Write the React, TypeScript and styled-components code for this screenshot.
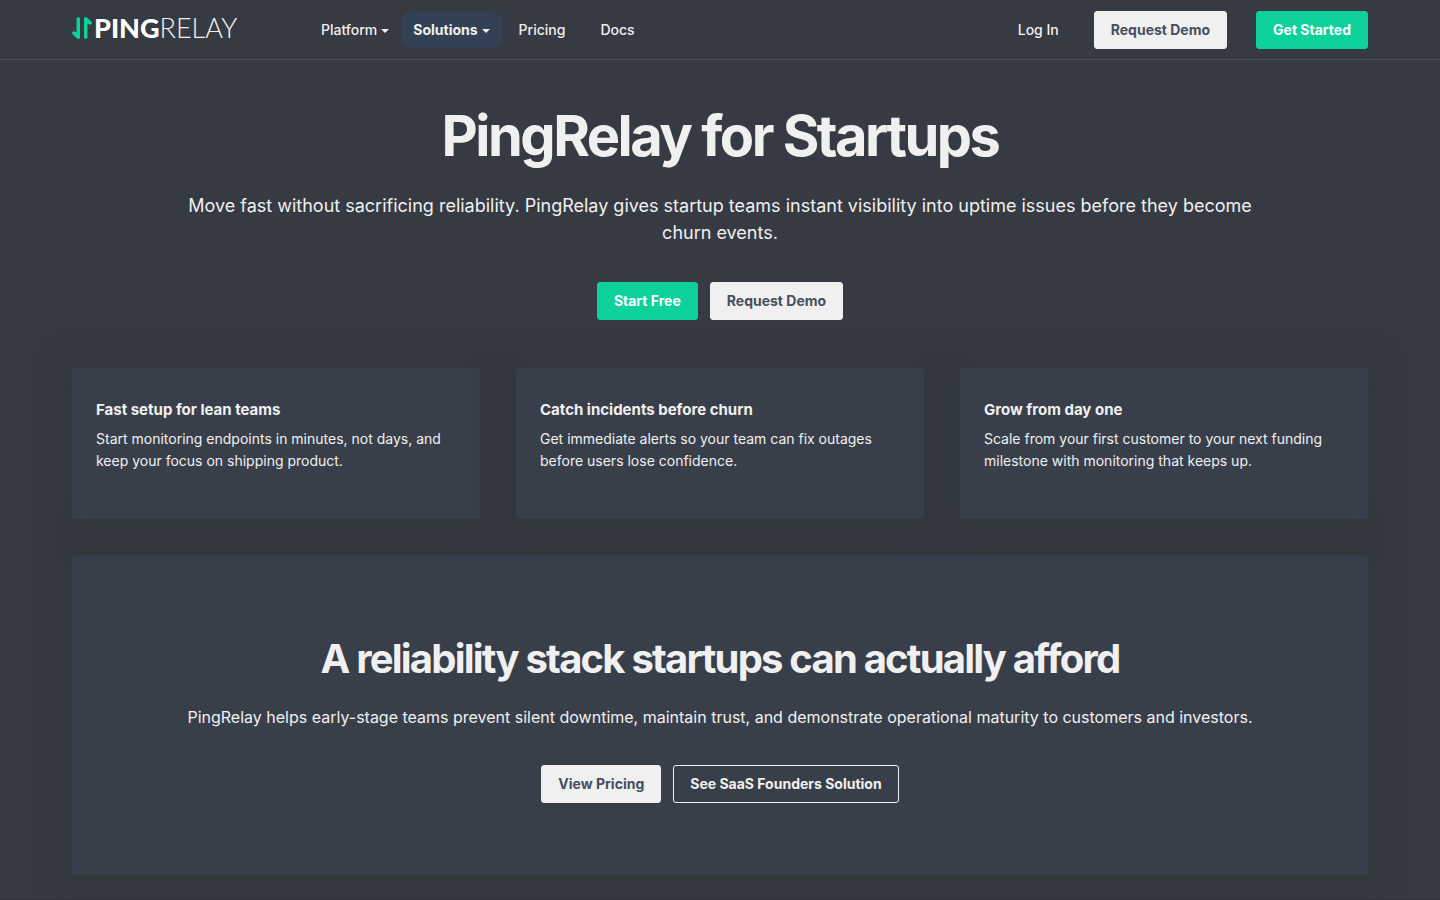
import React from "react";
import styled, { createGlobalStyle, css } from "styled-components";

const GlobalStyle = createGlobalStyle`
  *, *::before, *::after { box-sizing: border-box; }
  body {
    margin: 0;
    background: #363a42;
    color: #f0f0f0;
    font-family: Inter, "Liberation Sans", sans-serif;
    font-size: 14px;
    line-height: 22px;
  }
  h1, h2, h3, p { margin: 0; }
  a { color: inherit; text-decoration: none; }
`;

const Header = styled.header`
  display: flex;
  align-items: center;
  height: 60px;
  padding: 0 5%;
  border-bottom: 1px solid #4a4f5a;
`;

const Brand = styled.a`
  display: flex;
  align-items: center;
  width: 237px;
  padding-bottom: 4px;
`;

const Wordmark = styled.span`
  font-family: Lato, sans-serif;
  font-size: 27px;
  line-height: 28px;
  font-weight: 300;
  color: #f0f0f0;
  strong { font-weight: 900; color: #fff; }
`;

const Nav = styled.nav`
  display: flex;
  align-items: center;
  flex: 1;
`;

const navItem = css`
  display: flex;
  align-items: center;
  gap: 4px;
  height: 36px;
  padding: 0 12px;
  border: 0;
  border-radius: 10px;
  background: transparent;
  color: #f0f0f0;
  font: inherit;
  font-weight: 500;
`;

const NavButton = styled.button<{ $active?: boolean }>`
  ${navItem}
  ${(p) => p.$active && css`background: #334155; font-weight: 700;`}
`;

const NavLink = styled.a`
  ${navItem}
  margin-left: 5px;
  & + & { margin-left: 11px; }
`;

const Caret = styled.span`
  margin-top: 2px;
  border: 4px solid transparent;
  border-top-color: currentColor;
  border-bottom: 0;
`;

const Actions = styled.div`
  display: flex;
  align-items: center;
`;

const LoginLink = styled.a`
  font-weight: 500;
  margin-right: 35px;
`;

const Button = styled.a<{ $kind: "primary" | "light" | "outline" }>`
  display: inline-flex;
  align-items: center;
  height: 38px;
  padding: 0 16px;
  border: 1px solid transparent;
  border-radius: 3px;
  font-weight: 700;
  white-space: nowrap;
  ${(p) => p.$kind === "primary" && css`background: #0dd19b; border-color: #0dd19b; color: #fff;`}
  ${(p) => p.$kind === "light" && css`background: #f0f0f0; border-color: #f0f0f0; color: #474e5d;`}
  ${(p) => p.$kind === "outline" && css`border-color: #f0f0f0;`}
`;

const ActionButtons = styled.div`
  display: flex;
  gap: 29px;
`;

const Main = styled.main`
  padding: 48px 5% 24px;
`;

const Hero = styled.section`
  display: flex;
  flex-direction: column;
  align-items: center;
  text-align: center;
`;

const Title = styled.h1`
  font-size: 56px;
  line-height: 56px;
  font-weight: 700;
  letter-spacing: -0.045em;
`;

const Lead = styled.p`
  max-width: 1080px;
  margin-top: 28px;
  font-size: 18px;
  line-height: 27px;
`;

const ButtonRow = styled.div`
  display: flex;
  justify-content: center;
  gap: 12px;
  margin-top: 36px;
`;

const Cards = styled.section`
  display: grid;
  grid-template-columns: repeat(3, 1fr);
  gap: 36px;
  margin: 48px 0 36px;
`;

const panel = css`
  background: #383f4a;
  border-radius: 4px;
  box-shadow: 0 0 32px 16px rgba(42, 48, 48, 0.2);
`;

const Card = styled.article`
  ${panel}
  padding: 31px 24px 47px;
`;

const CardTitle = styled.h3`
  margin-bottom: 7px;
  font-size: 15px;
  line-height: 22px;
  font-weight: 700;
`;

const Callout = styled.section`
  ${panel}
  padding: 80px 24px 72px;
  text-align: center;
`;

const CalloutTitle = styled.h2`
  font-size: 40px;
  line-height: 48px;
  font-weight: 700;
  letter-spacing: -0.045em;
`;

const CalloutText = styled.p`
  margin-top: 22px;
  font-size: 16px;
  line-height: 24px;
`;

const Footer = styled.footer`
  height: 60px;
  background: #2f333b;
`;

const cards = [
  { title: "Fast setup for lean teams", text: "Start monitoring endpoints in minutes, not days, and keep your focus on shipping product." },
  { title: "Catch incidents before churn", text: "Get immediate alerts so your team can fix outages before users lose confidence." },
  { title: "Grow from day one", text: "Scale from your first customer to your next funding milestone with monitoring that keeps up." },
];

function LogoMark() {
  return (
    <svg width="22" height="24" viewBox="0 0 22 24" aria-hidden="true">
      <g fill="#0dd19b" stroke="#0dd19b" strokeWidth="2" strokeLinecap="round" strokeLinejoin="round">
        <path d="M5.5 2.5Q6.2 1.6 7 2.5V21.5Q6.6 22.4 5.8 21.8L1.2 17.6Q.8 16.2 2.2 16.3L5.5 18Z" />
        <path d="M14.5 21.5Q13.8 22.4 13 21.5V2.5Q13.4 1.6 14.2 2.2L18.8 6.4Q19.2 7.8 17.8 7.7L14.5 6Z" />
      </g>
    </svg>
  );
}

export default function App() {
  return (
    <>
      <GlobalStyle />
      <Header>
        <Brand href="#" aria-label="PingRelay">
          <LogoMark />
          <Wordmark><strong>PING</strong>RELAY</Wordmark>
        </Brand>
        <Nav>
          <NavButton type="button">Platform<Caret /></NavButton>
          <NavButton type="button" $active>Solutions<Caret /></NavButton>
          <NavLink href="#">Pricing</NavLink>
          <NavLink href="#">Docs</NavLink>
        </Nav>
        <Actions>
          <LoginLink href="#">Log In</LoginLink>
          <ActionButtons>
            <Button href="#" $kind="light">Request Demo</Button>
            <Button href="#" $kind="primary">Get Started</Button>
          </ActionButtons>
        </Actions>
      </Header>
      <Main>
        <Hero>
          <Title>PingRelay for Startups</Title>
          <Lead>
            Move fast without sacrificing reliability. PingRelay gives startup teams instant visibility
            into uptime issues before they become churn events.
          </Lead>
          <ButtonRow>
            <Button href="#" $kind="primary">Start Free</Button>
            <Button href="#" $kind="light">Request Demo</Button>
          </ButtonRow>
        </Hero>
        <Cards>
          {cards.map((card) => (
            <Card key={card.title}>
              <CardTitle>{card.title}</CardTitle>
              <p>{card.text}</p>
            </Card>
          ))}
        </Cards>
        <Callout>
          <CalloutTitle>A reliability stack startups can actually afford</CalloutTitle>
          <CalloutText>
            PingRelay helps early-stage teams prevent silent downtime, maintain trust, and demonstrate
            operational maturity to customers and investors.
          </CalloutText>
          <ButtonRow>
            <Button href="#" $kind="light">View Pricing</Button>
            <Button href="#" $kind="outline">See SaaS Founders Solution</Button>
          </ButtonRow>
        </Callout>
      </Main>
      <Footer />
    </>
  );
}
